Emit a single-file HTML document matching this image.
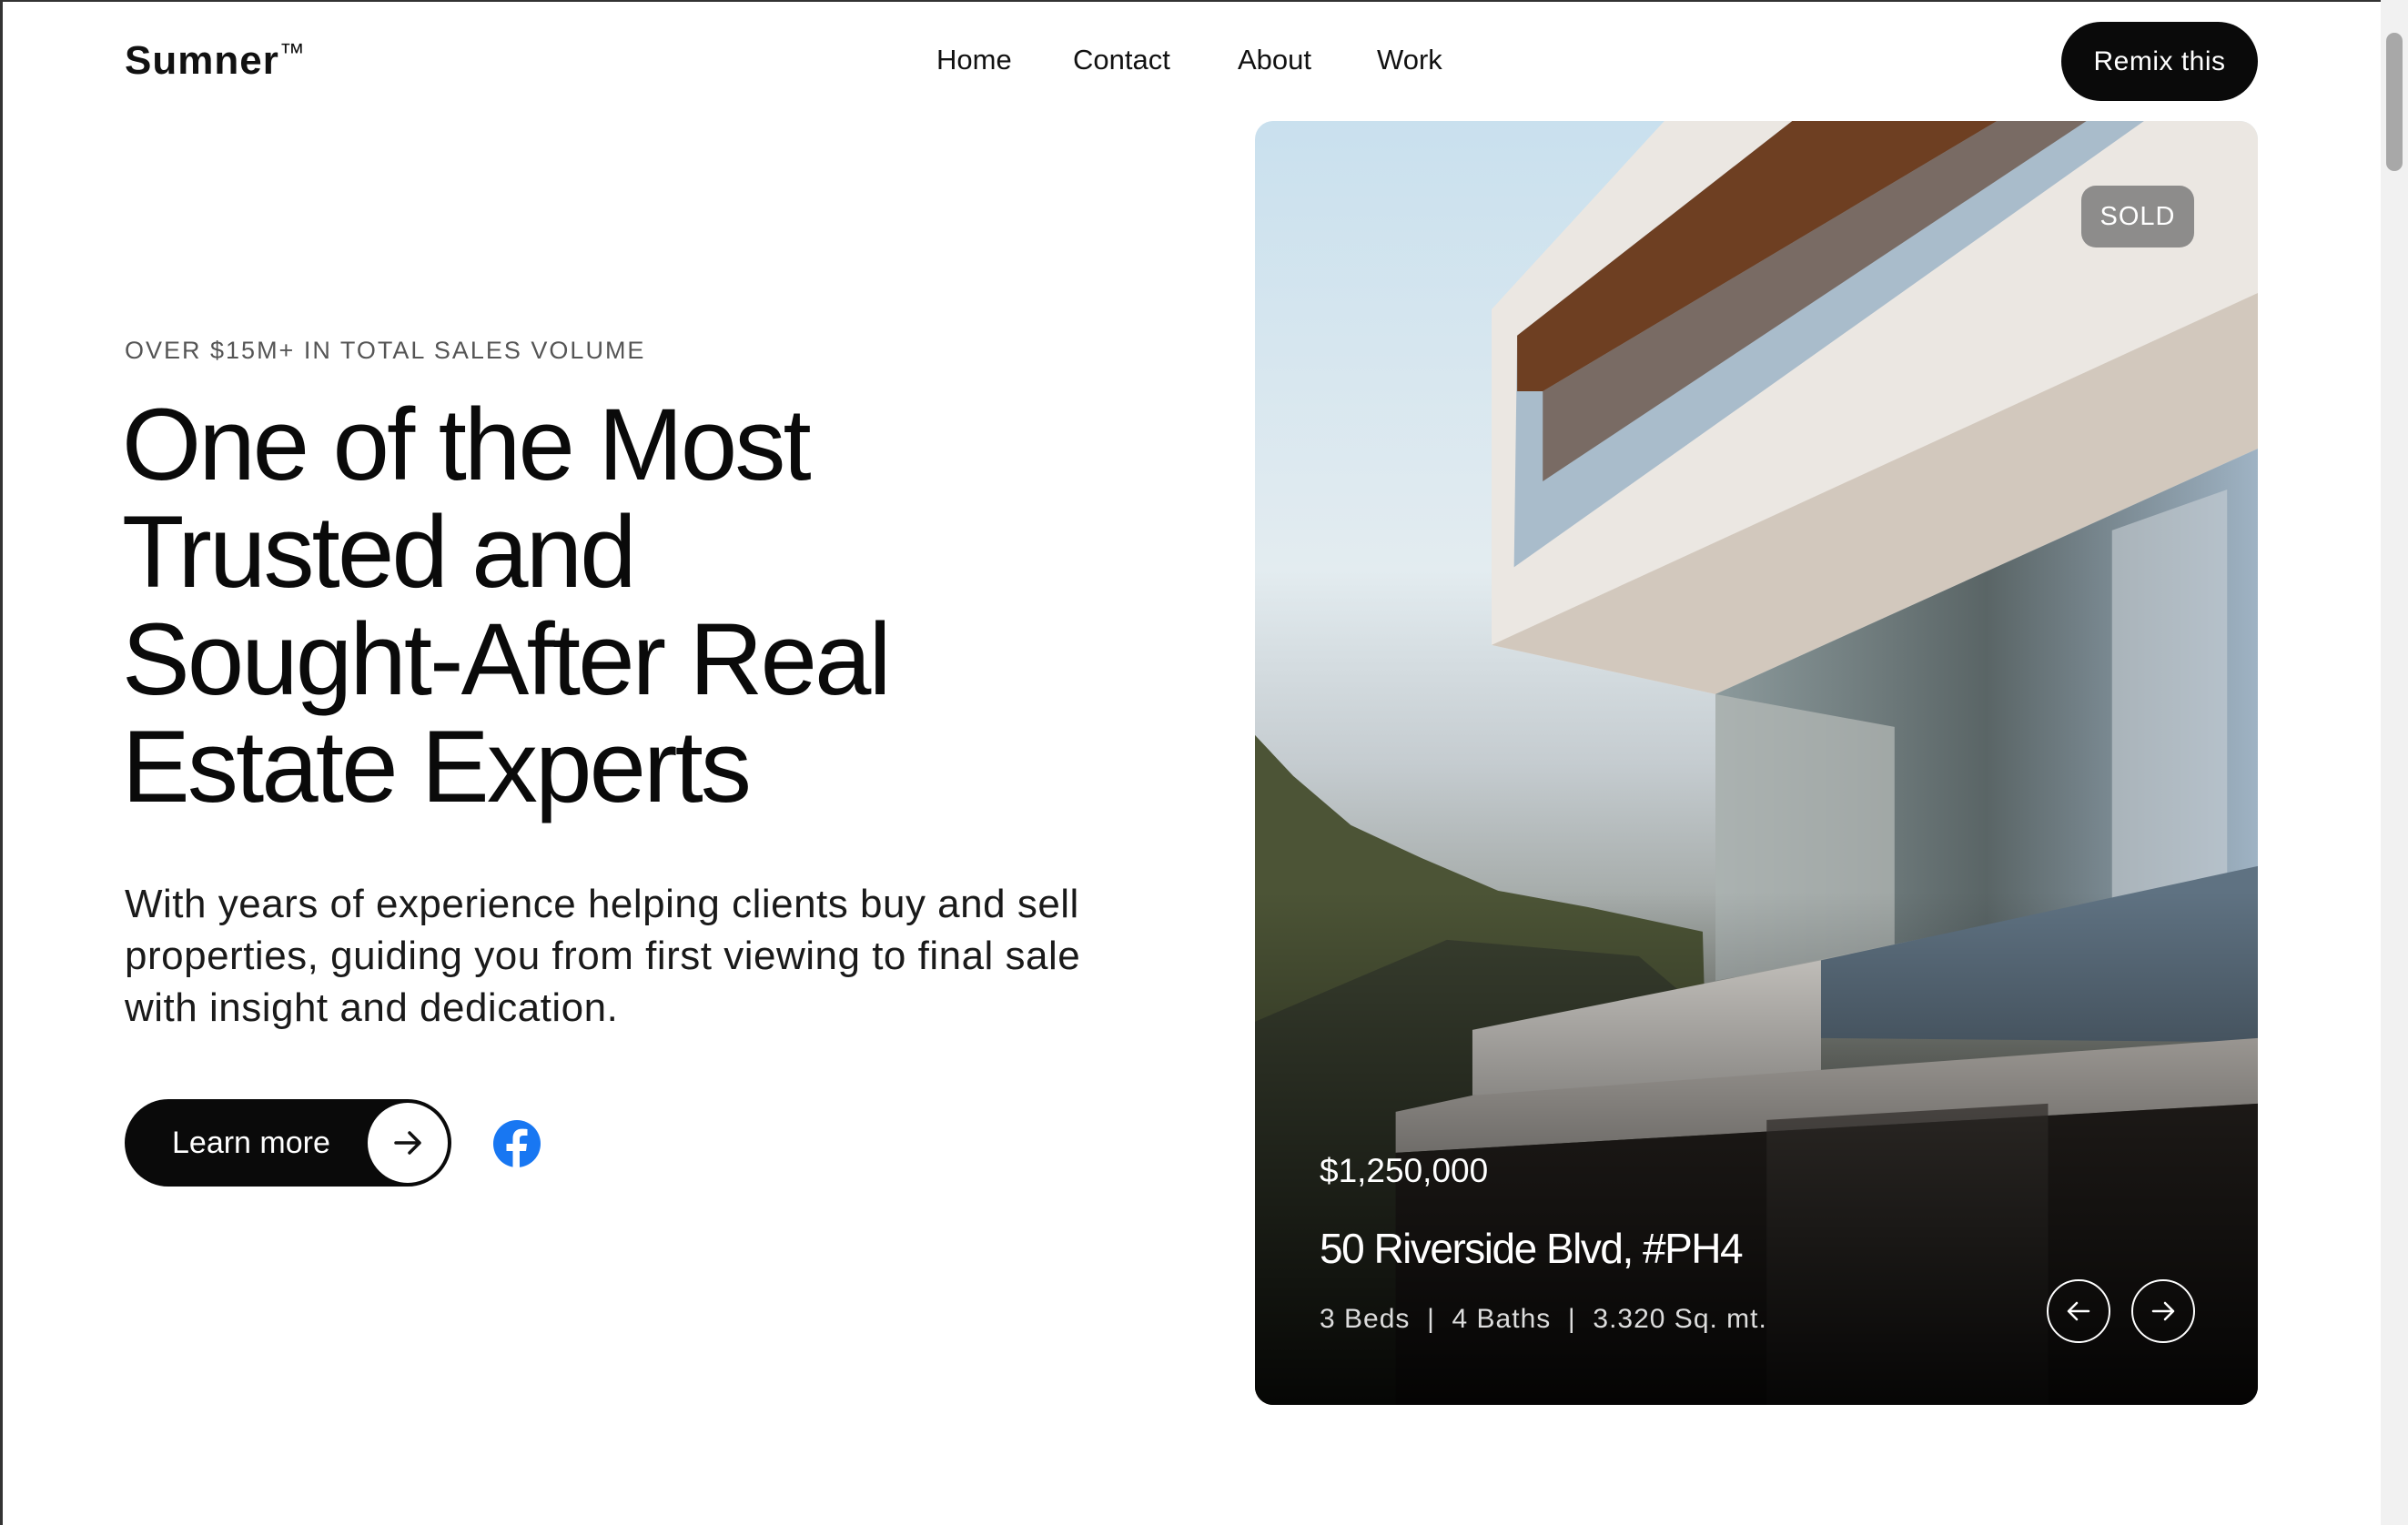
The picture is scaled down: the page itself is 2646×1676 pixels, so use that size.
<!DOCTYPE html>
<html><head><meta charset="utf-8">
<style>
*{margin:0;padding:0;box-sizing:border-box}
html,body{width:2646px;height:1676px;overflow:hidden;background:#fff;font-family:"Liberation Sans",sans-serif;color:#111}
.frame{position:absolute;left:0;top:0;width:2616px;height:1676px;border-left:3px solid #333;border-top:2px solid #333}
.logo{position:absolute;left:137px;top:42px;font-size:44px;font-weight:700;letter-spacing:1px}
.logo sup{font-size:28px;font-weight:400;vertical-align:14px}
.nav a{position:absolute;top:48px;font-size:31px;color:#111;text-decoration:none}
.remix{position:absolute;left:2265px;top:24px;width:216px;height:87px;border-radius:44px;background:#0a0a0a;color:#fff;font-size:30px;display:flex;align-items:center;justify-content:center;letter-spacing:0.5px}
.eyebrow{position:absolute;left:137px;top:370px;font-size:27px;color:#555;letter-spacing:2px}
h1{position:absolute;left:134px;top:430px;font-size:112px;line-height:118px;font-weight:400;letter-spacing:-2.8px;color:#0a0a0a}
.para{position:absolute;left:137px;top:965px;font-size:44px;line-height:57px;color:#1a1a1a;letter-spacing:0.5px;white-space:nowrap}
.btn{position:absolute;left:137px;top:1208px;width:359px;height:96px;border-radius:48px;background:#0a0a0a}
.btn span{position:absolute;left:52px;top:29px;color:#fff;font-size:34px}
.btn .c{position:absolute;right:4px;top:4px;width:88px;height:88px;border-radius:50%;background:#fff}
.card{position:absolute;left:1379px;top:133px;width:1102px;height:1411px;border-radius:20px;overflow:hidden}
.sold{position:absolute;left:908px;top:71px;width:124px;height:68px;border-radius:16px;background:rgba(110,110,110,.75);color:#fff;font-size:29px;display:flex;align-items:center;justify-content:center;letter-spacing:1px}
.price{position:absolute;left:71px;top:1133px;color:#fff;font-size:37px}
.addr{position:absolute;left:71px;top:1212px;color:#fff;font-size:46px;letter-spacing:-1.5px}
.spec{position:absolute;left:71px;top:1300px;color:#ddd;font-size:30px;letter-spacing:1px}
.arr{position:absolute;top:1273px;width:70px;height:70px;border-radius:50%;border:2px solid #fff}
.scroll{position:absolute;left:2616px;top:0;width:30px;height:1676px;background:#f1f1f1}
.thumb{position:absolute;left:2622px;top:36px;width:18px;height:152px;border-radius:9px;background:#a8a8a8}
</style></head><body>
<div class="frame"></div>
<div class="logo">Sumner<sup>™</sup></div>
<div class="nav"><a style="left:1029px">Home</a><a style="left:1179px">Contact</a><a style="left:1360px">About</a><a style="left:1513px">Work</a></div>
<div class="remix">Remix this</div>
<div class="eyebrow">OVER $15M+ IN TOTAL SALES VOLUME</div>
<h1>One of the Most<br>Trusted and<br>Sought-After Real<br>Estate Experts</h1>
<div class="para">With years of experience helping clients buy and sell<br>properties, guiding you from first viewing to final sale<br>with insight and dedication.</div>
<div class="btn"><span>Learn more</span><div class="c"><svg width="88" height="88" viewBox="0 0 88 88"><path d="M31 44h26M46 33l11 11-11 11" stroke="#111" stroke-width="3.5" fill="none" stroke-linecap="round" stroke-linejoin="round"/></svg></div></div>
<svg style="position:absolute;left:541px;top:1230px" width="54" height="54" viewBox="0 0 54 54"><circle cx="27" cy="27" r="26" fill="#1877f2"/><path d="M30 54V35h7l1-8h-8v-5c0-2.5 1-4 4-4h4.5v-7c-1-.2-3.5-.4-6-.4-6 0-10 3.6-10 10.3V27h-7v8h7v19z" fill="#fff"/></svg>
<div class="card">
<svg width="1102" height="1411" viewBox="0 0 1568 1568" preserveAspectRatio="none">
<defs>
<linearGradient id="sky" x1="0" y1="0" x2="0" y2="1"><stop offset="0" stop-color="#c9e0ee"/><stop offset=".35" stop-color="#e3ecf0"/><stop offset=".5" stop-color="#c5ccd0"/><stop offset=".7" stop-color="#8a8f88"/><stop offset="1" stop-color="#222"/></linearGradient>
<linearGradient id="shade" x1="0" y1="0" x2="0" y2="1"><stop offset=".6" stop-color="#000" stop-opacity="0"/><stop offset=".82" stop-color="#000" stop-opacity=".5"/><stop offset="1" stop-color="#000" stop-opacity=".9"/></linearGradient>
<linearGradient id="glass" x1="0" y1="0" x2="1" y2="0"><stop offset="0" stop-color="#8c9a9c"/><stop offset=".5" stop-color="#5a6566"/><stop offset="1" stop-color="#9fb3c4"/></linearGradient>
</defs>
<rect width="1568" height="1568" fill="url(#sky)"/>
<path d="M0 750 L60 800 L150 860 L260 900 L380 940 L520 960 L700 990 L720 1568 L0 1568Z" fill="#4c5436"/>
<path d="M0 1100 L300 1000 L600 1020 L720 1100 L720 1568 L0 1568Z" fill="#3a4030"/>
<path d="M370 230 L640 0 L1568 0 L1568 390 L720 700 L370 640Z" fill="#ebe7e2"/>
<path d="M410 262 L840 0 L1390 0 L405 545Z" fill="#a9bccb"/>
<path d="M410 262 L840 0 L1160 0 L450 330 L410 330Z" fill="#6e3f22"/>
<path d="M450 330 L1160 0 L1300 0 L450 440Z" fill="#5a3520" opacity=".6"/>
<path d="M370 640 L1568 210 L1568 400 L720 700Z" fill="#d2c8bd"/>
<path d="M720 700 L1568 400 L1568 915 L720 1050Z" fill="url(#glass)"/>
<path d="M720 700 L1000 740 L1000 1010 L720 1050Z" fill="#b8bcb9" opacity=".7"/>
<path d="M1340 500 L1520 450 L1520 930 L1340 950Z" fill="#c9d1d6" opacity=".6"/>
<path d="M340 1110 L885 1025 L885 1190 L340 1190Z" fill="#d9d6d1"/>
<path d="M885 1025 L1568 910 L1568 1125 L885 1120Z" fill="#5f7282"/>
<path d="M220 1210 L340 1190 L1568 1120 L1568 1200 L220 1260Z" fill="#cfcac4"/>
<path d="M220 1260 L1568 1200 L1568 1568 L220 1568Z" fill="#2d2824"/>
<path d="M800 1220 L1240 1200 L1240 1568 L800 1568Z" fill="#4a4540" opacity=".7"/>
<rect width="1568" height="1568" fill="url(#shade)"/>
</svg>
<div class="sold">SOLD</div>
<div class="price">$1,250,000</div>
<div class="addr">50 Riverside Blvd, #PH4</div>
<div class="spec">3 Beds &nbsp;|&nbsp; 4 Baths &nbsp;|&nbsp; 3.320 Sq. mt.</div>
<div class="arr" style="left:870px"><svg width="66" height="66" viewBox="0 0 66 66"><path d="M44 33H22M31 24l-9 9 9 9" stroke="#fff" stroke-width="2.5" fill="none" stroke-linecap="round" stroke-linejoin="round"/></svg></div>
<div class="arr" style="left:963px"><svg width="66" height="66" viewBox="0 0 66 66"><path d="M22 33h22M35 24l9 9-9 9" stroke="#fff" stroke-width="2.5" fill="none" stroke-linecap="round" stroke-linejoin="round"/></svg></div>
</div>
<div class="scroll"></div><div class="thumb"></div>
</body></html>
